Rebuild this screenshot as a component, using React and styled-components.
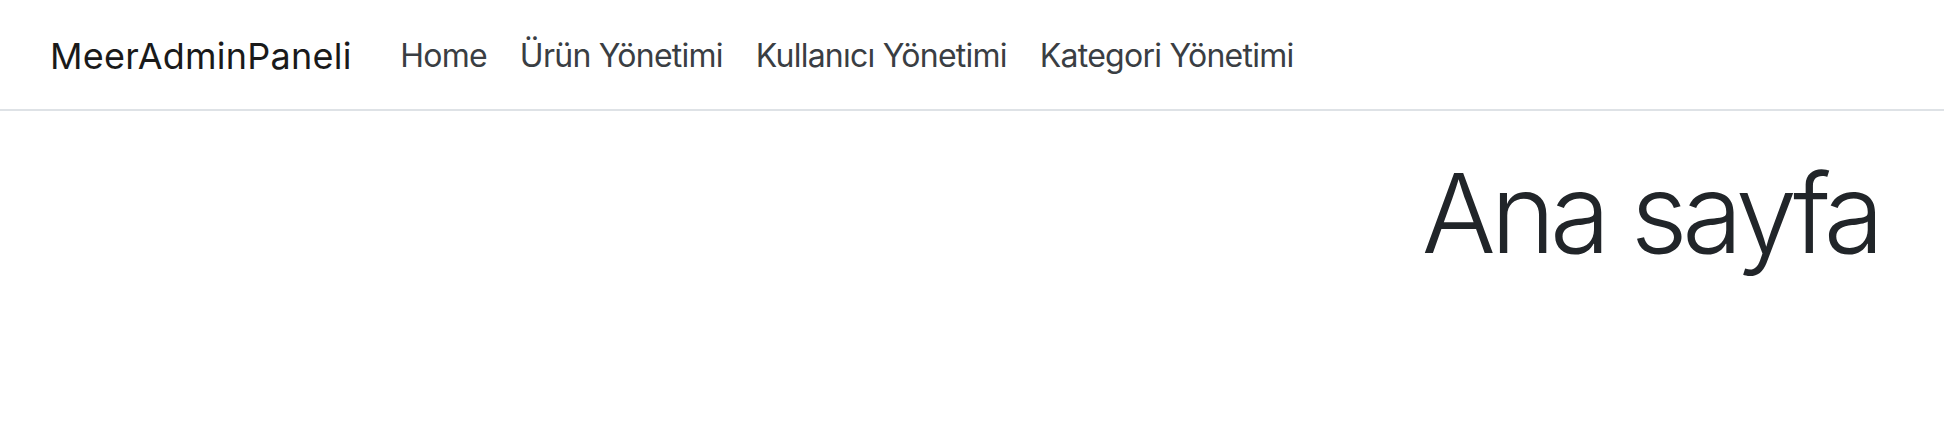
import styled, { createGlobalStyle } from "styled-components";

const GlobalStyle = createGlobalStyle`
  body {
    margin: 0;
    background: #fff;
    font-family: Inter, "Noto Sans", sans-serif;
    color: #212529;
  }
`;

const Navbar = styled.nav`
  display: flex;
  align-items: center;
  height: 109px;
  padding: 0 0 0 50px;
  border-bottom: 2px solid #dee2e6;
`;

const Brand = styled.a`
  font-size: 36px;
  letter-spacing: 0.25px;
  color: #1a1a1a;
  text-decoration: none;
  margin-right: 32px;
  padding-top: 2px;
`;

const NavList = styled.ul`
  display: flex;
  margin: 0;
  padding: 0;
  list-style: none;
`;

const NavLink = styled.a`
  display: block;
  padding: 2px 16.5px 0;
  font-size: 32px;
  letter-spacing: -0.75px;
  color: #3a3e43;
  text-decoration: none;
`;

const Main = styled.main`
  padding: 0 65px 0 0;
  text-align: right;
`;

const Title = styled.h1`
  margin: 36px 0 0;
  font-size: 110px;
  font-weight: 300;
  letter-spacing: -5.3px;
  line-height: 1.2;
  color: #212529;
`;

const links = ["Home", "Ürün Yönetimi", "Kullanıcı Yönetimi", "Kategori Yönetimi"];

const App = () => {
  return (
    <>
      <GlobalStyle />
      <Navbar>
        <Brand href="#">MeerAdminPaneli</Brand>
        <NavList>
          {links.map((l) => (
            <li key={l}>
              <NavLink href="#">{l}</NavLink>
            </li>
          ))}
        </NavList>
      </Navbar>
      <Main>
        <Title>Ana sayfa</Title>
      </Main>
    </>
  );
};

export default App;
